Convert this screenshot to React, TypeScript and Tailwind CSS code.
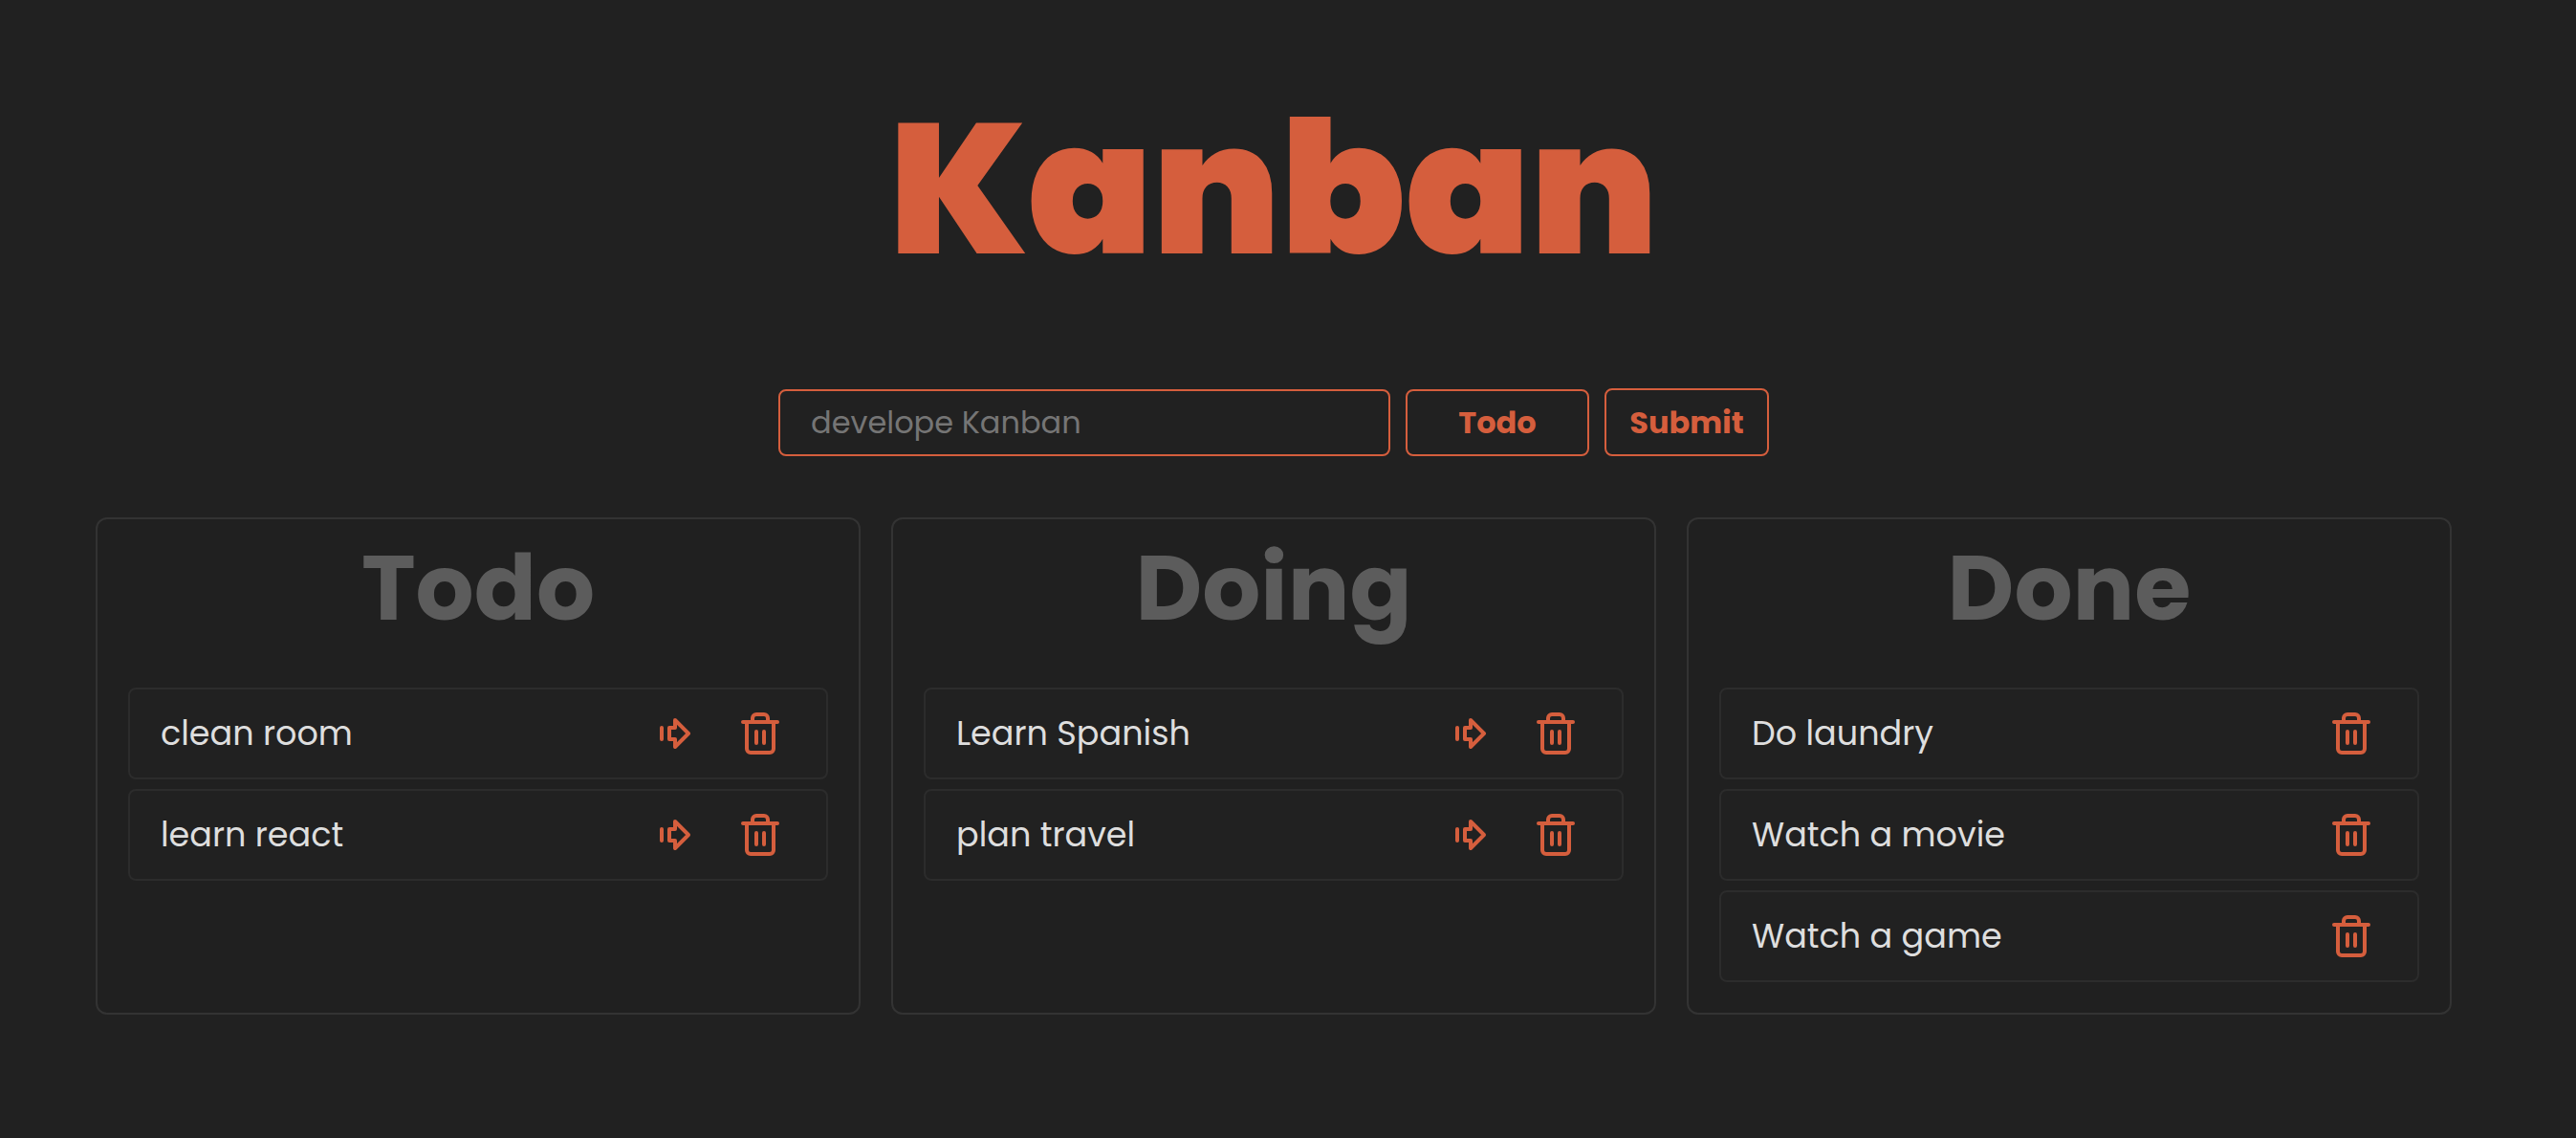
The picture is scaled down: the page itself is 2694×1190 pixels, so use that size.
import React, { useState } from "react";

type Task = { id: number; text: string };
type Column = { title: string; tasks: Task[] };

const initialColumns: Column[] = [
  { title: "Todo", tasks: [{ id: 1, text: "clean room" }, { id: 2, text: "learn react" }] },
  { title: "Doing", tasks: [{ id: 3, text: "Learn Spanish" }, { id: 4, text: "plan travel" }] },
  {
    title: "Done",
    tasks: [
      { id: 5, text: "Do laundry" },
      { id: 6, text: "Watch a movie" },
      { id: 7, text: "Watch a game" },
    ],
  },
];

const iconProps = {
  viewBox: "0 0 24 24",
  fill: "none",
  stroke: "currentColor",
  strokeWidth: 2,
  strokeLinecap: "round" as const,
  strokeLinejoin: "round" as const,
  className: "size-12",
  "aria-hidden": true,
};

function MoveIcon() {
  return (
    <svg {...iconProps}>
      <path d="M5 9v6" />
      <path d="M9 9h3V5l7 7-7 7v-4H9V9z" />
    </svg>
  );
}

function TrashIcon() {
  return (
    <svg {...iconProps}>
      <path d="M3 6h18" />
      <path d="M19 6v14a2 2 0 0 1-2 2H7a2 2 0 0 1-2-2V6m3 0V4a2 2 0 0 1 2-2h4a2 2 0 0 1 2 2v2" />
      <path d="M10 11v6M14 11v6" />
    </svg>
  );
}

export default function App() {
  const [columns, setColumns] = useState(initialColumns);
  const [text, setText] = useState("");
  const [target, setTarget] = useState("Todo");

  const add = (e: React.FormEvent) => {
    e.preventDefault();
    if (!text.trim()) return;
    setColumns(columns.map((c) => (c.title === target ? { ...c, tasks: [...c.tasks, { id: Date.now(), text }] } : c)));
    setText("");
  };

  const remove = (id: number) =>
    setColumns(columns.map((c) => ({ ...c, tasks: c.tasks.filter((t) => t.id !== id) })));

  const move = (from: number, task: Task) =>
    setColumns(
      columns.map((c, i) => {
        if (i === from) return { ...c, tasks: c.tasks.filter((t) => t.id !== task.id) };
        if (i === from + 1) return { ...c, tasks: [...c.tasks, task] };
        return c;
      }),
    );

  return (
    <main className="min-h-screen bg-[#212121] pt-[94px] pr-[130px] pb-16 pl-[100px] font-['Poppins','Inter',sans-serif] text-[#dedede]">
      <h1 className="text-center text-[192px] leading-[208px] font-black text-[#d55e3d]">Kanban</h1>

      <form onSubmit={add} className="mt-[104px] flex items-end justify-center gap-4 text-[32px] leading-[48px]">
        <input
          aria-label="New task"
          value={text}
          onChange={(e) => setText(e.target.value)}
          placeholder="develope Kanban"
          className="h-[70px] w-[640px] rounded-lg border-2 border-[#d55e3d] bg-transparent px-8 outline-none placeholder:text-[#757575]"
        />
        <select
          aria-label="Column"
          value={target}
          onChange={(e) => setTarget(e.target.value)}
          className="h-[70px] w-48 appearance-none rounded-lg border-2 border-[#d55e3d] bg-[#212121] text-center font-bold text-[#d55e3d] outline-none [text-align-last:center]"
        >
          {columns.map((c) => (
            <option key={c.title}>{c.title}</option>
          ))}
        </select>
        <button type="submit" className="h-[71px] w-[172px] rounded-lg border-2 border-[#d55e3d] text-center font-bold text-[#d55e3d]">
          Submit
        </button>
      </form>

      <div className="mt-16 grid grid-cols-3 gap-8">
        {columns.map((column, index) => (
          <section key={column.title} className="rounded-xl border-2 border-[#333333] bg-[#202020] px-8 pb-8">
            <h2 className="pt-[14px] text-center text-[96px] leading-[116px] font-bold text-[#5c5c5c]">{column.title}</h2>
            <ul className="mt-[46px] flex flex-col gap-[10px]">
              {column.tasks.map((task) => (
                <li key={task.id} className="flex h-24 items-center justify-between rounded-lg border-2 border-[#2c2c2c] bg-[#212121] px-8">
                  <span className="text-[35px] leading-[52px]">{task.text}</span>
                  <span className="flex gap-[15px] text-[#d55e3d]">
                    {index < columns.length - 1 && (
                      <button type="button" aria-label={`Move ${task.text}`} onClick={() => move(index, task)} className="px-[13px]">
                        <MoveIcon />
                      </button>
                    )}
                    <button type="button" aria-label={`Delete ${task.text}`} onClick={() => remove(task.id)} className="px-[13px]">
                      <TrashIcon />
                    </button>
                  </span>
                </li>
              ))}
            </ul>
          </section>
        ))}
      </div>
    </main>
  );
}
